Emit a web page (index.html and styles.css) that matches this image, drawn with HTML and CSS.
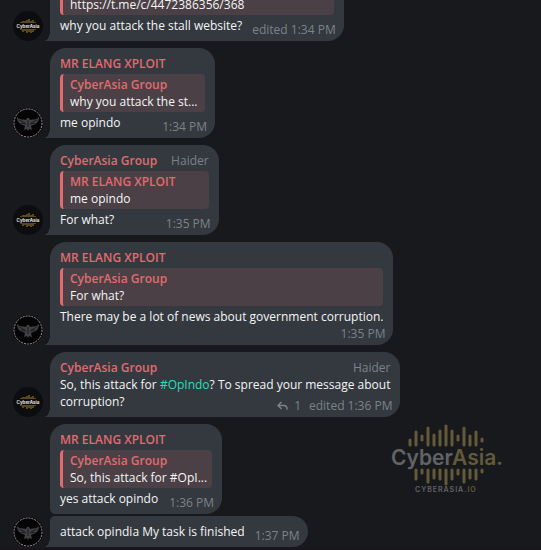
FILE: index.html
```
<!DOCTYPE html>
<html lang="en">
<head>
    <meta charset="UTF-8">
    <meta name="viewport" content="width=device-width, initial-scale=1.0">
    <title>Group Chat</title>
    <link rel="stylesheet" href="styles.css">
</head>
<body>
    <!-- shared avatar drawings -->
    <svg class="defs" aria-hidden="true">
        <symbol id="asia" viewBox="0 0 30 30">
            <circle cx="15" cy="15" r="15" fill="#0d0d0f"/>
            <path d="M8 11v1M10 10v2M12 10v2M14 9v3M16 8v4M18 10v2M20 9v3M22 11v1M8 18v1M10 18v3M12 18v2M14 18v4M16 18v3M18 18v4M20 18v3M22 18v1" stroke="#a5842d" stroke-width="1"/>
            <text x="15" y="17" text-anchor="middle" font-family="Inter, sans-serif" font-size="4.500" font-weight="700" fill="#e4e2dd">CyberAsia</text>
        </symbol>
        <symbol id="elang" viewBox="0 0 30 30">
            <circle cx="15" cy="15" r="15" fill="#050506"/>
            <circle cx="15" cy="15" r="14" fill="none" stroke="#a3959a" stroke-width="1" stroke-dasharray="2 1"/>
            <path d="M4 9c2 3 6 2 9 3l1-2h2l1 2c3-1 7 0 9-3 0 4-2 7-6 8l-2 1 1 4-3-1-1 2-1-2-3 1 1-4-2-1c-4-1-6-4-6-8z" fill="#414144"/>
            <path d="M6 12l6 3M8 15l5 1M24 12l-6 3M22 15l-5 1M15 12v7" stroke="#1c1c1f" stroke-width="1"/>
        </symbol>
    </svg>

    <main class="chat">
        <div class="row">
            <svg class="avatar" role="img" aria-label="CyberAsia Group"><use href="#asia"/></svg>
            <div class="bubble tail">
                <div class="reply">
                    <div class="quote">https://t.me/c/4472386356/368</div>
                </div>
                <div class="text">why you attack the stall website?<span class="meta">edited 1:34 PM</span></div>
            </div>
        </div>

        <div class="row">
            <svg class="avatar" role="img" aria-label="MR ELANG XPLOIT"><use href="#elang"/></svg>
            <div class="bubble tail">
                <div class="head"><span class="name">MR ELANG XPLOIT</span></div>
                <div class="reply">
                    <div class="name">CyberAsia Group</div>
                    <div class="quote">why you attack the st...</div>
                </div>
                <div class="text">me opindo<span class="meta">1:34 PM</span></div>
            </div>
        </div>

        <div class="row">
            <svg class="avatar" role="img" aria-label="CyberAsia Group"><use href="#asia"/></svg>
            <div class="bubble tail">
                <div class="head"><span class="name">CyberAsia Group</span><span class="rank">Haider</span></div>
                <div class="reply">
                    <div class="name">MR ELANG XPLOIT</div>
                    <div class="quote">me opindo</div>
                </div>
                <div class="text">For what?<span class="meta">1:35 PM</span></div>
            </div>
        </div>

        <div class="row">
            <svg class="avatar" role="img" aria-label="MR ELANG XPLOIT"><use href="#elang"/></svg>
            <div class="bubble tail">
                <div class="head"><span class="name">MR ELANG XPLOIT</span></div>
                <div class="reply">
                    <div class="name">CyberAsia Group</div>
                    <div class="quote">For what?</div>
                </div>
                <div class="text">There may be a lot of news about government corruption.<span class="meta meta-below">1:35 PM</span></div>
            </div>
        </div>

        <div class="row">
            <svg class="avatar" role="img" aria-label="CyberAsia Group"><use href="#asia"/></svg>
            <div class="bubble tail">
                <div class="head"><span class="name">CyberAsia Group</span><span class="rank">Haider</span></div>
                <div class="text">So, this attack for <a href="#opindo">#OpIndo</a>? To spread your message about<br>corruption?<span class="meta"><svg class="replies" viewBox="0 0 11 10"><path d="M4.500 1L1 4.500 4.500 8M1 4.500h6q3 0 3 4"/></svg>1<span class="edited">edited</span> 1:36 PM</span></div>
            </div>
        </div>

        <div class="row">
            <div class="bubble first">
                <div class="head"><span class="name">MR ELANG XPLOIT</span></div>
                <div class="reply">
                    <div class="name">CyberAsia Group</div>
                    <div class="quote">So, this attack for #OpI...</div>
                </div>
                <div class="text">yes attack opindo<span class="meta">1:36 PM</span></div>
            </div>
        </div>

        <div class="row joined">
            <svg class="avatar" role="img" aria-label="MR ELANG XPLOIT"><use href="#elang"/></svg>
            <div class="bubble tail last">
                <div class="text">attack opindia My task is finished<span class="meta">1:37 PM</span></div>
            </div>
        </div>
    </main>

    <svg class="watermark" viewBox="0 0 112 70" role="img" aria-label="CyberAsia.io">
        <path class="bars" d="M19 16v5M25 8v13M31 12v4M37 4v17M43 11v10M49 7v14M55 2v19M61 7v14M67 12v4M73 4v17M79 12v9M85 8v13M91 15v2M25 46v9M31 46v3M37 46v12M43 46v8M49 46v9M55 46v14M61 46v9M67 46v4M73 46v12M79 46v8M85 46v9M91 46v2"/>
        <text class="brand" x="0" y="41"><tspan>Cyber</tspan><tspan class="gold">Asia.</tspan></text>
        <text class="site" x="24" y="68"><tspan>CYBERASIA</tspan><tspan class="gold">.IO</tspan></text>
    </svg>
</body>
</html>
```
FILE: styles.css
```
* {
    box-sizing: border-box;
}
body {
    margin: 0;
    height: 100vh;
    overflow: hidden;
    background: #18191d;
    color: #f5f5f5;
    font-family: "Open Sans", "Noto Sans", sans-serif;
    font-size: 12px;
    line-height: 17px;
}
.defs {
    position: absolute;
    width: 0;
    height: 0;
}
.chat {
    display: flex;
    flex-direction: column;
    justify-content: flex-end;
    gap: 7px;
    height: 100%;
    padding: 0 13px 1px;
    border-bottom: 2px solid #1b131d;
}
.row {
    display: flex;
    flex-shrink: 0;
    align-items: flex-end;
    gap: 7px;
}
.joined {
    margin-top: -5px;
}
.avatar {
    flex: none;
    width: 30px;
    height: 30px;
}
.bubble {
    position: relative;
    padding: 7px 10px;
    border-radius: 16px;
    background: #33393f;
}
.tail {
    border-bottom-left-radius: 0;
}
.tail::before {
    content: "";
    position: absolute;
    left: -6px;
    bottom: 0;
    width: 6px;
    height: 10px;
    background: radial-gradient(ellipse 6px 10px at 0 0, transparent 96%, #33393f 100%);
}
.first {
    margin-left: 37px;
    border-bottom-left-radius: 5px;
}
.last {
    border-top-left-radius: 5px;
}
.head {
    display: flex;
    justify-content: space-between;
    gap: 14px;
}
.name {
    color: #e06c70;
    font-weight: 600;
}
.rank {
    color: #7b8389;
}
.reply {
    min-width: 145px;
    margin: 2px 0;
    padding: 2px 5px 2px 7px;
    border-left: 3px solid #e06c70;
    border-radius: 4px;
    background: #4a4045;
}
.quote {
    white-space: nowrap;
}
.text a {
    color: #2fdcbc;
    text-decoration: none;
}
.meta {
    float: right;
    margin: 4px -2px -4px 10px;
    color: #7b8389;
    white-space: nowrap;
}
.meta-below {
    display: block;
    float: none;
    margin-top: 0;
    text-align: right;
}
.replies {
    width: 11px;
    height: 10px;
    margin-right: 6px;
    fill: none;
    stroke: #7b8389;
    stroke-width: 1.5;
    vertical-align: -1px;
}
.edited {
    margin-left: 8px;
}
.watermark {
    position: absolute;
    right: 38px;
    bottom: 56px;
    width: 112px;
    height: 70px;
    font-family: Inter, sans-serif;
    fill: #626366;
}
.bars {
    stroke: #625a38;
    stroke-width: 3;
    stroke-linecap: round;
}
.brand {
    font-size: 21px;
    font-weight: 600;
}
.site {
    font-size: 7px;
    font-weight: 600;
    letter-spacing: 1px;
}
.gold {
    fill: #625a38;
}
```
